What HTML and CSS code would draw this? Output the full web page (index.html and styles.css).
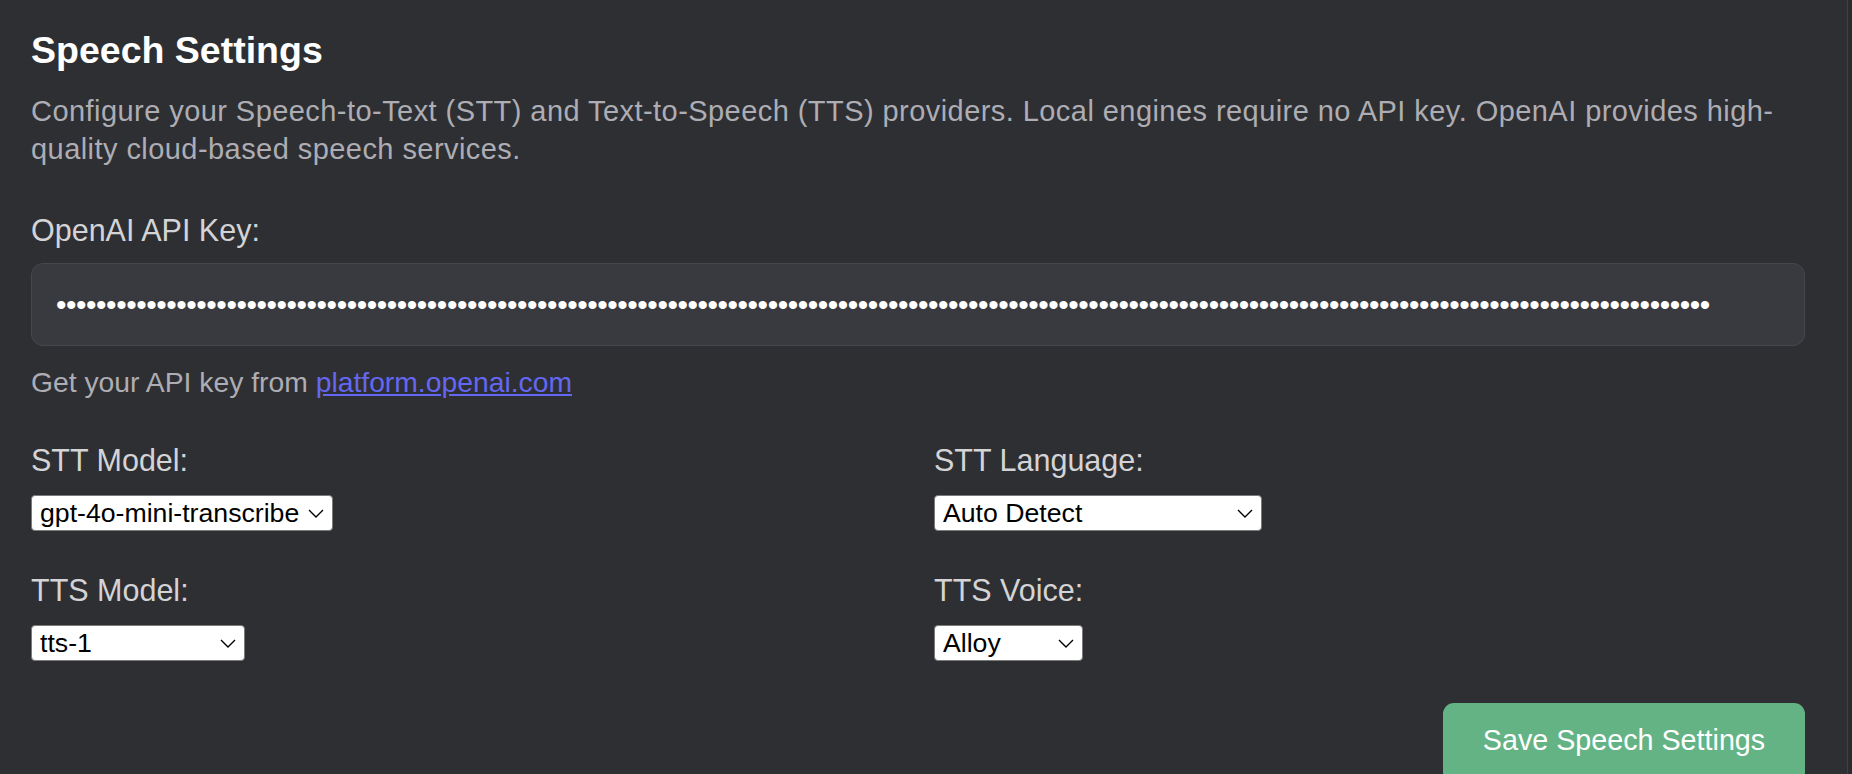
FILE: index.html
```html
<!DOCTYPE html>
<html lang="en">
<head>
<meta charset="utf-8">
<title>Speech Settings</title>
<link rel="stylesheet" href="styles.css">
</head>
<body>
<div class="frame">
  <section class="panel">
    <h2 class="title">Speech Settings</h2>
    <p class="desc">Configure your Speech-to-Text (STT) and Text-to-Speech (TTS) providers. Local engines require no API key. OpenAI provides high-quality cloud-based speech services.</p>

    <div class="field">
      <label class="label" for="apikey">OpenAI API Key:</label>
      <input class="key-input" id="apikey" type="password" value="sk-proj-aB3dE5fG7hJ9kL1mN3pQ5rS7tU9vW1xY3zA5bC7dE9fG1hJ3kL5mN7pQ9rS1tU3vW5xY7zA9bC1dE3fG5hJ7kL9mN1pQ3rS5tU7vW9xY1zA3bC5dE7fG9hJ1kL3mN5pQ7rS9tU1vW3xY5zA7bC9dE1fG3hJ5k">
      <p class="help">Get your API key from <a href="#" class="link">platform.openai.com</a></p>
    </div>

    <div class="grid">
      <div class="cell">
        <label class="label" for="sttmodel">STT Model:</label>
        <div class="select-wrap">
          <select id="sttmodel" class="select sel-stt">
            <option>gpt-4o-mini-transcribe</option>
          </select>
          <svg class="chev" viewBox="0 0 16 9" width="16" height="9"><path d="M1 1l7 7 7-7" fill="none" stroke="#000" stroke-width="1.4"/></svg>
        </div>
      </div>
      <div class="cell">
        <label class="label" for="sttlang">STT Language:</label>
        <div class="select-wrap">
          <select id="sttlang" class="select sel-lang">
            <option>Auto Detect</option>
          </select>
          <svg class="chev" viewBox="0 0 16 9" width="16" height="9"><path d="M1 1l7 7 7-7" fill="none" stroke="#000" stroke-width="1.4"/></svg>
        </div>
      </div>
      <div class="cell">
        <label class="label" for="ttsmodel">TTS Model:</label>
        <div class="select-wrap">
          <select id="ttsmodel" class="select sel-tts">
            <option>tts-1</option>
          </select>
          <svg class="chev" viewBox="0 0 16 9" width="16" height="9"><path d="M1 1l7 7 7-7" fill="none" stroke="#000" stroke-width="1.4"/></svg>
        </div>
      </div>
      <div class="cell">
        <label class="label" for="ttsvoice">TTS Voice:</label>
        <div class="select-wrap">
          <select id="ttsvoice" class="select sel-voice">
            <option>Alloy</option>
          </select>
          <svg class="chev" viewBox="0 0 16 9" width="16" height="9"><path d="M1 1l7 7 7-7" fill="none" stroke="#000" stroke-width="1.4"/></svg>
        </div>
      </div>
    </div>

    <div class="actions">
      <button class="save-btn" type="button">Save Speech Settings</button>
    </div>
  </section>
  <div class="edge"></div>
</div>
</body>
</html>
```

FILE: styles.css
```css
html, body {
  margin: 0;
  padding: 0;
  height: 100%;
  background: #2e2f33;
  overflow: hidden;
}

body {
  font-family: "Liberation Sans", Arial, sans-serif;
  color: #d4d4d6;
}

.frame {
  display: flex;
  min-height: 100%;
}

.panel {
  flex: 1;
  padding: 28px 42px 0 31px;
}

.edge {
  width: 4px;
  border-left: 1px solid #3f4045;
  background: #2b2c30;
}

.title {
  margin: 0;
  font-size: 37.5px;
  line-height: 44px;
  font-weight: 700;
  color: #ffffff;
}

.desc {
  margin: 21px 0 0;
  font-size: 29px;
  line-height: 37.5px;
  letter-spacing: 0.44px;
  color: #adadb3;
}

.field {
  margin-top: 44px;
}

.label {
  display: block;
  font-size: 30.5px;
  line-height: 36px;
  color: #d4d4d6;
}

.key-input {
  display: block;
  box-sizing: border-box;
  width: 100%;
  height: 83px;
  margin-top: 15px;
  padding: 0 24px;
  background: #393a40;
  border: 1.5px solid #46474d;
  border-radius: 12px;
  color: #ffffff;
  font-family: "Liberation Sans", Arial, sans-serif;
  font-size: 30px;
  letter-spacing: -0.48px;
  outline: none;
}

.help {
  margin: 19px 0 0;
  font-size: 28.3px;
  line-height: 34px;
  color: #adadb3;
}

.link {
  color: #6467f2;
  text-decoration: underline;
}

.grid {
  display: grid;
  grid-template-columns: 1fr 1fr;
  column-gap: 32px;
  row-gap: 41px;
  margin-top: 43px;
}

.cell {
  display: flex;
  flex-direction: column;
  align-items: flex-start;
  gap: 17px;
}

.select-wrap {
  position: relative;
  display: inline-block;
}

.select {
  display: block;
  box-sizing: border-box;
  height: 36px;
  padding: 0 32px 0 8px;
  background: #ffffff;
  border: 1.5px solid #7a7a7a;
  border-radius: 4px;
  color: #000000;
  font-family: "Liberation Sans", Arial, sans-serif;
  font-size: 26.67px;
  -webkit-appearance: none;
  appearance: none;
  outline: none;
}

.sel-stt { width: 302px; }
.sel-lang { width: 328px; }
.sel-tts { width: 214px; }
.sel-voice { width: 149px; }

.chev {
  position: absolute;
  right: 9px;
  top: 14px;
  pointer-events: none;
}

.actions {
  display: flex;
  justify-content: flex-end;
  margin-top: 42px;
}

.save-btn {
  box-sizing: border-box;
  width: 362px;
  height: 80px;
  padding: 0 0 6px;
  background: #63b385;
  border: none;
  border-radius: 11px;
  color: #ffffff;
  font-family: "Liberation Sans", Arial, sans-serif;
  font-size: 28.7px;
}
```
